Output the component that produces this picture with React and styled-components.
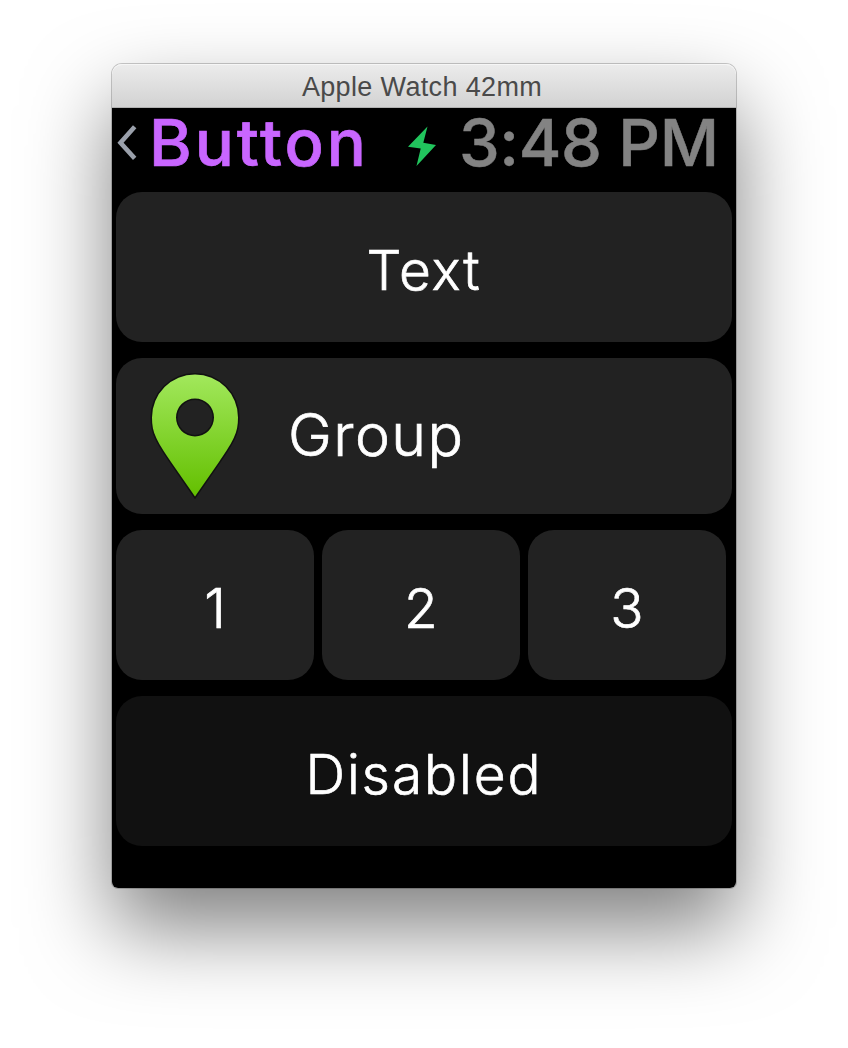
import React from "react";
import styled, { createGlobalStyle } from "styled-components";

const GlobalStyle = createGlobalStyle`
  * { box-sizing: border-box; }
  body { margin: 0; background: #fff; }
`;

const Desktop = styled.main`
  width: 848px;
  height: 1048px;
  padding: 64px 112px 0;
  overflow: hidden;
  background: #fff;
  font-family: Inter, Roboto, "Liberation Sans", sans-serif;
`;

const Window = styled.section`
  width: 624px;
  height: 824px;
  display: flex;
  flex-direction: column;
  border-radius: 10px 10px 6px 6px;
  box-shadow: 0 0 0 1px rgba(0, 0, 0, 0.2), 0 40px 84px rgba(0, 0, 0, 0.5);
`;

const TitleBar = styled.header`
  height: 44px;
  display: flex;
  align-items: center;
  justify-content: center;
  padding: 2px 4px 0 0;
  border-radius: 10px 10px 0 0;
  border-bottom: 1px solid #b1b1b1;
  background: linear-gradient(#ececec, #d2d2d2);
  box-shadow: inset 0 1px 0 #f6f6f6;
  color: #4a4a4a;
  font-family: "Liberation Sans", Arial, sans-serif;
  font-size: 27px;
  line-height: 30px;
  letter-spacing: 0.35px;
  white-space: nowrap;
`;

const Screen = styled.div`
  flex: 1;
  padding: 0 4px;
  border-radius: 0 0 6px 6px;
  background: #000;
`;

const StatusBar = styled.div`
  height: 84px;
  display: flex;
  align-items: flex-start;
`;

const StatusIcon = styled.svg`
  flex: none;
  margin-top: ${(p) => p.$top}px;
  margin-left: ${(p) => p.$left}px;
`;

const StatusText = styled.span`
  flex: none;
  width: ${(p) => p.$width}px;
  margin-left: ${(p) => p.$left}px;
  color: ${(p) => p.$color};
  font-size: 65px;
  font-weight: 500;
  line-height: 70px;
  letter-spacing: ${(p) => p.$spacing}px;
  -webkit-text-stroke: ${(p) => p.$stroke || 0}px ${(p) => p.$color};
  white-space: nowrap;
`;

const Stack = styled.div`
  display: flex;
  flex-direction: column;
  gap: 16px;
`;

const ButtonRow = styled.div`
  display: flex;
  gap: 8px;
`;

const WatchButton = styled.button`
  display: flex;
  align-items: center;
  justify-content: center;
  width: ${(p) => p.$width || 616}px;
  height: ${(p) => p.$height || 150}px;
  margin: 0;
  padding: 6px 0 0;
  border: 0;
  border-radius: 26px;
  background: #222;
  color: #fff;
  font-family: inherit;
  font-size: 55px;
  font-weight: 300;
  line-height: 70px;
  letter-spacing: ${(p) => p.$spacing || 0}px;
  -webkit-text-stroke: 0.7px #fff;
  &:disabled { background: #111; color: #fff; }
`;

const GroupButton = styled(WatchButton)`
  justify-content: flex-start;
  padding: 0 0 0 32px;
  font-size: 59px;
`;

const GroupLabel = styled.span`
  margin: -2px 0 0 46px;
`;

export default function App() {
  return (
    <Desktop>
      <GlobalStyle />
      <Window>
        <TitleBar>Apple Watch 42mm</TitleBar>
        <Screen>
          <StatusBar>
            <StatusIcon $top={16} $left={0} width="22" height="38" viewBox="0 0 22 38">
              <path d="M18.7 2.8 4.5 18.7 18.7 34.4" fill="none" stroke="#9aa0ab" strokeWidth="4.6" />
            </StatusIcon>
            <StatusText $color="#c966ff" $left={11} $width={218} $spacing={3} $stroke={0.7}>Button</StatusText>
            <StatusIcon $top={18} $left={40} width="30" height="41" viewBox="0 0 30 41">
              <path d="M20.5.5 16.3 16.7 29 19 9.5 40 13.7 22.4 1 20.7Z" fill="#21c55d" />
            </StatusIcon>
            <StatusText $color="#838383" $left={22} $width={260} $spacing={-0.4} $stroke={0.5}>3:48 PM</StatusText>
          </StatusBar>
          <Stack>
            <WatchButton $spacing={1.8}>Text</WatchButton>
            <GroupButton $height={156} $spacing={1.4}>
              <svg width="94" height="130" viewBox="0 0 94 130">
                <defs>
                  <linearGradient id="pin" x1="0" y1="0" x2="0" y2="1">
                    <stop offset="0" stopColor="#a2e85c" />
                    <stop offset="1" stopColor="#63bf00" />
                  </linearGradient>
                </defs>
                <path
                  fillRule="evenodd"
                  d="M47 3.500A43 43 0 0 0 4 46.500C4 54 5 60.500 8.300 67C12 75 18.500 84 23 91L47 125.500L71 91C75.500 84 82 75 85.700 67C89 60.500 90 54 90 46.500A43 43 0 0 0 47 3.500ZM47 27.500A19 19 0 1 1 47 65.500A19 19 0 1 1 47 27.500Z"
                  fill="url(#pin)"
                  stroke="#111"
                  strokeWidth="3"
                  paintOrder="stroke"
                />
              </svg>
              <GroupLabel>Group</GroupLabel>
            </GroupButton>
            <ButtonRow>
              <WatchButton $width={198}>1</WatchButton>
              <WatchButton $width={198}>2</WatchButton>
              <WatchButton $width={198}>3</WatchButton>
            </ButtonRow>
            <WatchButton disabled $spacing={1.9}>Disabled</WatchButton>
          </Stack>
        </Screen>
      </Window>
    </Desktop>
  );
}
